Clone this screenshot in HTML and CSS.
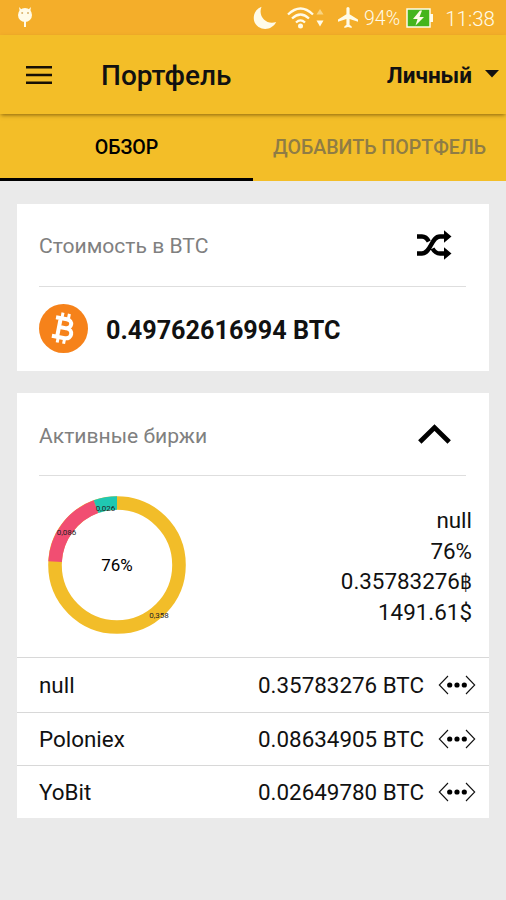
FILE: index.html
```html
<!DOCTYPE html>
<html lang="ru">
<head>
<meta charset="utf-8">
<title>Портфель</title>
<link rel="stylesheet" href="styles.css">
</head>
<body>
<svg class="defs" width="0" height="0" aria-hidden="true">
  <symbol id="more" viewBox="0 0 38 20">
    <path d="M10 1 L1.300 10 L10 19 M28 1 L36.700 10 L28 19" fill="none" stroke="#111" stroke-width="1.100"/>
    <circle cx="11.700" cy="10" r="2.600"/><circle cx="19" cy="10" r="2.600"/><circle cx="26.300" cy="10" r="2.600"/>
  </symbol>
</svg>
<div class="status">
  <svg class="droid" width="18" height="24" viewBox="0 0 18 24" fill="#fffbe8">
    <circle cx="9" cy="9" r="7"/><path d="M3 1l4 4-3 2zM15 1l-4 4 3 2z"/><path d="M8 15h2v6H8z"/>
    <circle cx="6.200" cy="7" r="1" fill="#d9b26c"/><circle cx="12" cy="7" r="1" fill="#d9b26c"/>
  </svg>
  <svg class="moon" width="24" height="24" viewBox="0 0 24 24" fill="#fffbe8"><path d="M8.500 .8C-1 4.500-1.500 16.500 5.500 21C12 25 20 22.500 23.200 16C14 19.500 4.500 11 8.500 .8z"/></svg>
  <svg class="wifi" width="38" height="24" viewBox="0 0 38 24" fill="none" stroke="#fffbe8" stroke-width="2.300">
    <path d="M1 8.500Q13.500-3.500 26 8.500M5 12.500Q13.500 4.500 22 12.500M9 16.500Q13.500 12.300 18 16.500"/>
    <circle cx="13.500" cy="20" r="2.500" fill="#fffbe8" stroke="none"/>
    <path d="M29.500 8.500h7L33 3z" fill="#f9d480" stroke="none"/><path d="M29.500 14.500h7L33 20.500z" fill="#fffbe8" stroke="none"/>
  </svg>
  <svg class="plane" width="20" height="21" viewBox="2 2 19 20" preserveAspectRatio="none" fill="#fffbe8"><path d="M21 16v-2l-8-5V3.500C13 2.700 12.300 2 11.500 2S10 2.700 10 3.500V9l-8 5v2l8-2.500V19l-2 1.500V22l3.500-1 3.500 1v-1.500L13 19v-5.500z"/></svg>
  <span class="percent">94%</span>
  <svg class="battery" width="28" height="20" viewBox="0 0 28 20"><path d="M24 6h3v8h-3z" fill="#fffbe8"/><rect x="1" y="1" width="23" height="18" fill="#45b51c" stroke="#fffbe8" stroke-width="1.500"/><path d="M14 2.500L7 11h4.500L9.500 17.500 18 9h-4.500L16 2.500z" fill="#fffbe8"/></svg>
  <span class="clock">11:38</span>
</div>
<header class="toolbar">
  <svg class="menu" width="26" height="18" viewBox="0 0 26 18"><path d="M0 1.300h26M0 9h26M0 16.700h26" stroke="#160f05" stroke-width="2.500"/></svg>
  <h1 class="title">Портфель</h1>
  <span class="account">Личный</span>
  <svg class="caret" width="14" height="8" viewBox="0 0 14 8"><path d="M0 0h14L7 7.500z" fill="#111"/></svg>
</header>
<nav class="tabs">
  <div class="tab active"><span>ОБЗОР</span></div>
  <div class="tab"><span class="add">ДОБАВИТЬ ПОРТФЕЛЬ</span></div>
</nav>
<main class="content">
  <section class="card">
    <div class="head">
      <h2 class="head-title">Стоимость в BTC</h2>
      <svg class="shuffle" width="35" height="30" viewBox="0 0 35 30"><path d="M0 6.500h5c3 0 5 1.500 6.800 5M0 23.500h5c9 0 9-17 18-17h5M15.500 18.500c2 3.500 4 5 7.500 5h5" fill="none" stroke="#000" stroke-width="4.400"/><path d="M27 .3l7.500 6.200-7.500 6.200zM27 17.300l7.500 6.200-7.500 6.200z"/></svg>
    </div>
    <div class="total">
      <svg class="coin" width="49" height="49" viewBox="0 0 49 49"><circle cx="24.500" cy="24.500" r="24.500" fill="#f6821a"/>
        <g transform="rotate(11 24.500 24.500)" fill="none" stroke="#fff" stroke-width="4"><path d="M15 14.800h11c7 0 7 9 0 9h-7M19 23.800h8.500c7.500 0 7.500 10 0 10H14.500M19.800 14v20"/><path d="M21 9v6M27.500 9v6M21 34v5.500M27.500 34v5.500" stroke-width="3"/></g></svg>
      <span class="amount">0.49762616994 BTC</span>
    </div>
  </section>
  <section class="card">
    <div class="head">
      <h2 class="head-title exchanges">Активные биржи</h2>
      <svg class="chevron" width="33" height="20" viewBox="0 0 33 20"><path d="M1.800 18L16.500 3.500 31.200 18" fill="none" stroke="#000" stroke-width="4.800"/></svg>
    </div>
    <div class="summary">
      <svg class="donut" width="138" height="138" viewBox="0 0 138 138">
        <g fill="none" stroke-width="13.600" transform="rotate(-90 69 69)">
          <circle cx="69" cy="69" r="62" pathLength="100" stroke="#f2bd29"/>
          <circle cx="69" cy="69" r="62" pathLength="100" stroke="#f14e72" stroke-dasharray="18.600 81.400" stroke-dashoffset="-75.900"/>
          <circle cx="69" cy="69" r="62" pathLength="100" stroke="#20c8b2" stroke-dasharray="5.500 94.500" stroke-dashoffset="-94.500"/>
        </g>
        <g class="slice"><text x="57.500" y="15">0,026</text><text x="18.500" y="39">0,086</text><text x="111" y="121.500">0,358</text></g>
        <text class="share" x="69" y="75">76%</text>
      </svg>
      <div class="figures">
        <span>null</span><span>76%</span><span>0.35783276<span class="baht">฿</span></span><span>1491.61$</span>
      </div>
    </div>
    <div class="row first"><span>null</span><span class="value">0.35783276 BTC</span><svg width="38" height="20"><use href="#more"/></svg></div>
    <div class="row"><span>Poloniex</span><span class="value">0.08634905 BTC</span><svg width="38" height="20"><use href="#more"/></svg></div>
    <div class="row"><span>YoBit</span><span class="value">0.02649780 BTC</span><svg width="38" height="20"><use href="#more"/></svg></div>
  </section>
</main>
</body>
</html>
```
FILE: styles.css
```css
* { box-sizing: border-box; }
body { margin: 0; height: 900px; overflow: hidden; background: #eaeaea; color: #111; font-family: Roboto, "Liberation Sans", sans-serif; }
h1, h2 { margin: 0; }
svg { display: block; flex: none; }
.defs { display: none; }
.status { height: 35px; display: flex; align-items: center; background: #f4ae2a; color: #fffbe8; padding: 1px 11px 0 16px; font-weight: 300; white-space: nowrap; }
.moon { margin-left: 219px; }
.wifi { margin-left: 10px; }
.plane { margin-left: 13px; margin-top: -2px; }
.percent { width: 36px; margin-left: 6px; font-size: 19.500px; padding-top: 1px; }
.battery { margin-left: 6px; margin-top: -1px; }
.clock { margin-left: auto; font-size: 20.500px; padding-top: 1px; }
.toolbar { position: relative; height: 79px; display: flex; align-items: center; background: #f3be28; padding: 0 7px 0 26px; box-shadow: 0 2px 4px -1px rgba(90, 60, 0, .7); }
.title { margin-left: 49px; font-size: 28px; font-weight: 500; line-height: 32px; padding-top: 2px; }
.account { margin-left: auto; font-size: 22.500px; font-weight: 700; padding-top: 1px; }
.caret { margin-left: 13px; margin-top: -1px; }
.tabs { height: 67px; display: flex; background: #f3be28; }
.tab { flex: 1; display: flex; align-items: center; justify-content: center; border-bottom: 3px solid transparent; padding-top: 3px; font-size: 19.600px; font-weight: 500; color: #8f7c45; white-space: nowrap; }
.active { color: #000; border-color: #000; }
.content { display: flex; flex-direction: column; gap: 22px; padding: 23px 17px; }
.card { background: #fff; }
.head { height: 83px; margin: 0 23px 0 22px; display: flex; align-items: center; justify-content: space-between; border-bottom: 1px solid #dedede; }
.head-title { font-size: 21.100px; font-weight: 400; color: #808080; padding-top: 1px; }
.exchanges { padding-top: 3px; }
.shuffle { margin-right: 14px; }
.chevron { margin-right: 15px; }
.total { height: 84px; padding-left: 22px; display: flex; align-items: center; gap: 18px; }
.coin { margin-top: -1px; }
.amount { font-size: 25.200px; font-weight: 700; padding-top: 3px; }
.summary { height: 181px; display: flex; justify-content: space-between; padding: 20px 17px 0 31px; }
.figures { padding-top: 9px; display: flex; flex-direction: column; text-align: right; font-size: 22.400px; line-height: 30.500px; }
.baht { font-family: "DejaVu Sans Condensed", "DejaVu Sans", sans-serif; font-size: 21px; line-height: 1; }
.slice { font-size: 8px; text-anchor: middle; fill: #222; }
.share { font-size: 17px; text-anchor: middle; }
.row { height: 53px; display: flex; align-items: center; border-top: 1px solid #d8d8d8; padding: 0 13px 0 22px; font-size: 22.400px; }
.first { height: 55px; }
.value { margin-left: auto; margin-right: 14px; }
```
